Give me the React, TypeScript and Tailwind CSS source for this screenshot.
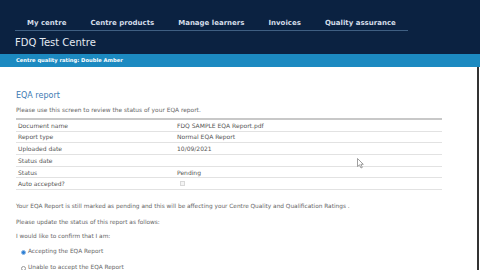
const NAV = ['My centre', 'Centre products', 'Manage learners', 'Invoices', 'Quality assurance'];

const ROWS: [string, string][] = [
  ['Document name', 'FDQ SAMPLE EQA Report.pdf'],
  ['Report type', 'Normal EQA Report'],
  ['Uploaded date', '10/09/2021'],
  ['Status date', ''],
  ['Status', 'Pending'],
  ['Auto accepted?', ''],
];

const font = { fontFamily: '"DejaVu Sans", Verdana, sans-serif' };

export default function App() {
  return (
    <div className="relative w-[480px] h-[270px] overflow-hidden bg-white" style={font}>
      {/* Header */}
      <div className="bg-[#0b2241] pt-[17px] pl-[15px]">
        <div className="flex w-[393px] h-[14px] items-center border-b border-[#3f5f82]">
          {NAV.map((n) => (
            <div key={n} className="px-3 text-[7px] font-bold text-[#d3dde9] whitespace-nowrap">
              {n}
            </div>
          ))}
        </div>
        <div className="h-[23px] flex items-center text-[10px] text-[#e6ebf1]">FDQ Test Centre</div>
      </div>
      <div className="bg-[#1c8ac1] h-[13px] flex items-center pl-[16px] text-[5.2px] font-bold text-white">
        Centre quality rating: Double Amber
      </div>

      {/* Content */}
      <div className="flex">
        <div className="flex-1 pl-[16px] pt-[25px]">
          <div className="text-[8px] text-[#3d7ab3] leading-none">EQA report</div>
          <div className="mt-[8px] text-[5.9px] text-[#666] leading-none">
            Please use this screen to review the status of your EQA report.
          </div>
          <div className="mt-[4px] w-[426px] border-t-2 border-[#c8c8c8]">
            {ROWS.map(([k, v]) => (
              <div key={k} className="flex h-[11.7px] items-center border-b border-[#e2e2e2] text-[6px] text-[#555]">
                <div className="w-[161px] pl-[2px]">{k}</div>
                <div className="flex items-center">
                  {k === 'Auto accepted?' ? (
                    <span className="ml-[3px] w-[5px] h-[5px] border border-[#d8d8d8] bg-[#f4f4f4]" />
                  ) : (
                    v
                  )}
                </div>
              </div>
            ))}
          </div>
          <div className="mt-[14px] text-[5.8px] text-[#666] leading-none">
            Your EQA Report is still marked as pending and this will be affecting your Centre Quality and Qualification Ratings .
          </div>
          <div className="mt-[10px] text-[5.8px] text-[#666] leading-none">
            Please update the status of this report as follows:
          </div>
          <div className="mt-[8px] text-[5.8px] text-[#666] leading-none">I would like to confirm that I am:</div>
          <div className="mt-[10px] flex items-center gap-[2px] pl-[5px] text-[5.8px] text-[#666] leading-none">
            <span className="w-[5px] h-[5px] rounded-full bg-[#2a7fd4] border border-[#8fb8e6]" />
            Accepting the EQA Report
          </div>
          <div className="mt-[10px] flex items-center gap-[2px] pl-[5px] text-[5.8px] text-[#666] leading-none">
            <span className="w-[5px] h-[5px] rounded-full bg-white border border-[#999]" />
            Unable to accept the EQA Report
          </div>
        </div>
        <div className="w-[2px] mr-[1px] bg-[#333] self-stretch h-[203px]" />
      </div>

      {/* Mouse cursor */}
      <svg className="absolute left-[357px] top-[158px]" width="7" height="11" viewBox="0 0 7 11">
        <path d="M0.5 0.5 L0.5 8.5 L2.5 6.8 L4 10 L5.3 9.4 L3.9 6.3 L6.3 6.3 Z" fill="#fff" stroke="#777" strokeWidth="0.7" />
      </svg>
    </div>
  );
}
